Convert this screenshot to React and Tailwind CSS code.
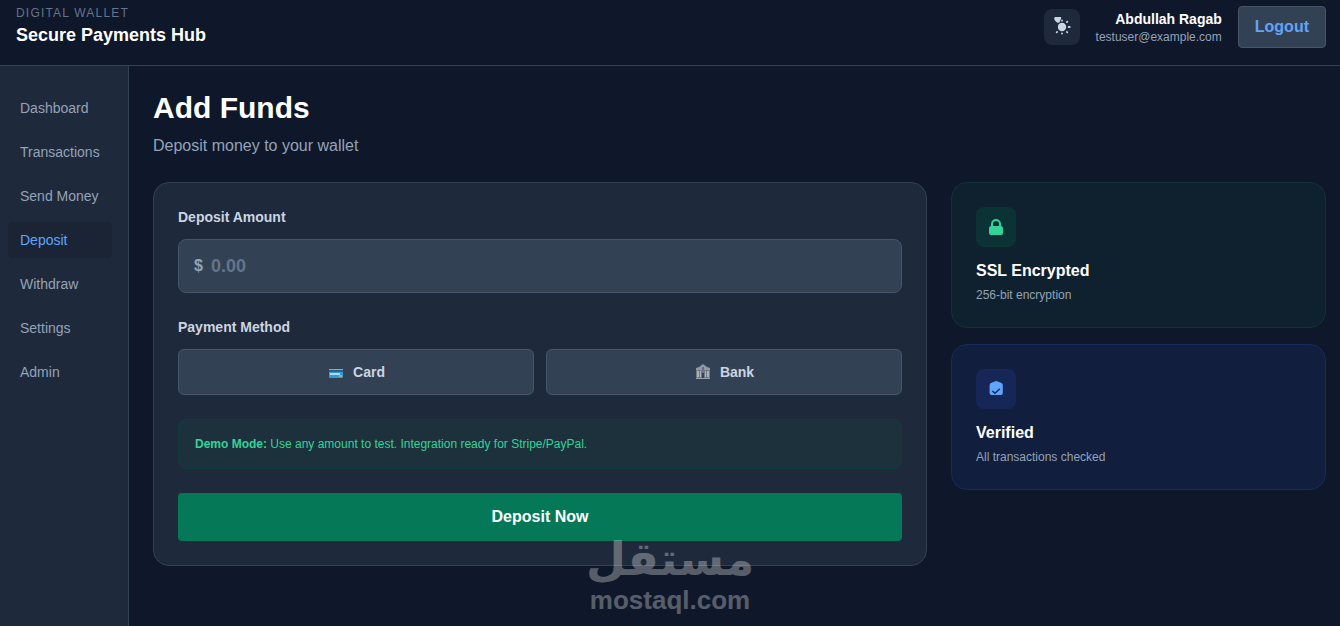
/**
 * Deposit page: header + sidebar + deposit form + trust cards
 */
import { useState } from 'react'

const NAV_ITEMS = ['Dashboard', 'Transactions', 'Send Money', 'Deposit', 'Withdraw', 'Settings', 'Admin']

const ThemeIcon = () => (
  <svg width="20" height="20" viewBox="0 0 20 20" fill="currentColor" aria-hidden="true">
    <circle cx="10" cy="10" r="4.2" />
    <path d="M3 0h5.200a1 1 0 01.9 1.400L7.600 5.200Q5.800 6.400 4 4.800L2.300 2.600Q1.800.6 3 0Z" />
    <path
      d="M10 3.500v.2M10 16.300v.2M16.700 10h1M14.900 5.100l.4-.4M14.900 14.900l.4.4M5.100 14.900l-.4.4"
      fill="none"
      stroke="currentColor"
      strokeWidth="1.800"
      strokeLinecap="round"
    />
  </svg>
)

const LockIcon = () => (
  <svg width="20" height="20" viewBox="0 0 20 20" fill="currentColor" aria-hidden="true">
    <path
      fillRule="evenodd"
      clipRule="evenodd"
      d="M5 9V7a5 5 0 0110 0v2a2 2 0 012 2v5a2 2 0 01-2 2H5a2 2 0 01-2-2v-5a2 2 0 012-2zm8-2v2H7V7a3 3 0 016 0z"
    />
  </svg>
)

const VerifiedIcon = () => (
  <svg width="20" height="20" viewBox="0 0 20 20" aria-hidden="true">
    <path
      d="M8.700 2.400q1.500-.7 3 0l3.800 1.700q1.300.7 1.300 2.200V14a2 2 0 01-2 2H5.600a2 2 0 01-2-2V6.300q0-1.500 1.300-2.200Z"
      fill="currentColor"
    />
    <path d="M6.300 12l2.600 2.300 5-4.600" fill="none" stroke="#162a5c" strokeWidth="1.400" />
  </svg>
)

const CardIcon = () => (
  <svg width="18" height="18" viewBox="0 0 18 18" aria-hidden="true">
    <rect x="2" y="6" width="14" height="9" rx="1" fill="#2a9fe0" />
    <rect x="2" y="6" width="14" height="1" fill="#5bb8ee" />
    <rect x="2" y="7" width="14" height="2" fill="#35607f" />
    <rect x="3" y="10" width="10" height="2" fill="#b9d6ea" />
    <rect x="12" y="12" width="3" height="2" fill="#c9a45c" />
  </svg>
)

const BankIcon = () => (
  <svg width="18" height="18" viewBox="0 0 18 18" aria-hidden="true">
    <path d="M2 7V5l3-1 4-3 4 3 3 1v2Z" fill="#8f98a3" />
    <path d="M2 7h14v9H2Z" fill="#6f7a86" />
    <path d="M3 8h2v6H3zM6 8h1v6H6zM11 8h1v6h-1zM13 8h2v6h-2z" fill="#a9b1ba" />
    <rect x="8" y="10" width="2" height="5" fill="#39414d" />
    <rect x="8" y="4" width="2" height="3" fill="#7d5aa8" />
    <rect x="2" y="15" width="14" height="1" fill="#9aa3ad" />
  </svg>
)

const METHODS = [
  { id: 'card', label: 'Card', Icon: CardIcon },
  { id: 'bank', label: 'Bank', Icon: BankIcon },
]

const Header = () => (
  <header className="flex items-center justify-between pt-[5px] pb-4 pl-4 pr-3.5 border-b border-[#334155]">
    <div>
      <p className="text-xs tracking-widest text-[#64748b]">DIGITAL WALLET</p>
      <p className="text-lg font-bold text-white">Secure Payments Hub</p>
    </div>
    <div className="flex items-center gap-4">
      <button
        className="w-9 h-9 rounded-lg bg-[#1e293b] text-[#cbd5e1] flex items-center justify-center"
        aria-label="Toggle theme"
      >
        <ThemeIcon />
      </button>
      <div className="text-right">
        <p className="text-sm font-bold text-white">Abdullah Ragab</p>
        <p className="text-xs text-[#94a3b8]">testuser@example.com</p>
      </div>
      <button className="px-4 py-2 rounded border border-[#475569] bg-[#334155] font-bold text-[#60a5fa]">
        Logout
      </button>
    </div>
  </header>
)

const Sidebar = ({ active }) => (
  <aside className="w-[129px] shrink-0 bg-[#1e293b] border-r border-[#334155] pt-6 pl-2 pr-4">
    <nav className="flex flex-col gap-2">
      {NAV_ITEMS.map((item) => (
        <a
          key={item}
          href="#"
          className={`px-3 py-2 rounded text-sm whitespace-nowrap ${
            item === active ? 'bg-[#1b2435] text-[#60a5fa]' : 'text-[#94a3b8]'
          }`}
        >
          {item}
        </a>
      ))}
    </nav>
  </aside>
)

const DepositForm = () => {
  const [amount, setAmount] = useState('')
  const [method, setMethod] = useState(null)

  return (
    <form
      onSubmit={(e) => e.preventDefault()}
      className="col-span-2 self-start flex flex-col gap-6 p-6 rounded-2xl border border-[#334155] bg-[#1e293b]"
    >
      <div>
        <label htmlFor="amount" className="block mb-3 text-sm font-bold text-[#cbd5e1]">
          Deposit Amount
        </label>
        <div className="flex items-center gap-2 pl-[15px] pr-4 rounded-lg border border-[#475569] bg-[#334155]">
          <span className="font-bold text-[#94a3b8]">$</span>
          <input
            id="amount"
            value={amount}
            onChange={(e) => setAmount(e.target.value)}
            placeholder="0.00"
            className="flex-1 min-w-0 py-3 bg-transparent text-lg font-bold text-white placeholder:text-[#64748b] outline-none"
          />
        </div>
      </div>

      <div>
        <p className="mb-3 text-sm font-bold text-[#cbd5e1]">Payment Method</p>
        <div className="grid grid-cols-2 gap-3">
          {METHODS.map(({ id, label, Icon }) => (
            <button
              key={id}
              type="button"
              aria-pressed={method === id}
              onClick={() => setMethod(id)}
              className="flex items-center justify-center gap-2 py-3 rounded-md border border-[#475569] bg-[#334155] text-sm font-bold text-[#cbd5e1]"
            >
              <Icon />
              {label}
            </button>
          ))}
        </div>
      </div>

      <p className="p-4 rounded-lg border border-[#0f3d3e] bg-[#1c313b] text-xs text-[#34d399]">
        <strong>Demo Mode:</strong> Use any amount to test. Integration ready for Stripe/PayPal.
      </p>

      <button type="submit" className="py-3 rounded-sm bg-[#047857] font-bold text-white">
        Deposit Now
      </button>
    </form>
  )
}

const InfoCard = ({ title, text, className, iconClassName, children }) => (
  <div className={`p-6 rounded-2xl border ${className}`}>
    <div className={`w-10 h-10 rounded-lg flex items-center justify-center ${iconClassName}`}>{children}</div>
    <h2 className="mt-3 font-bold text-white">{title}</h2>
    <p className="mt-1 text-xs text-[#94a3b8]">{text}</p>
  </div>
)

const Watermark = () => (
  <div className="absolute left-1/2 bottom-3 -translate-x-1/2 flex flex-col items-center text-white opacity-30 pointer-events-none">
    <span
      lang="ar"
      dir="rtl"
      className="font-['DejaVu_Sans',sans-serif] text-[46px] leading-[54px] font-bold"
    >
      مستقل
    </span>
    <span className="text-[26px] leading-7 font-bold">mostaql.com</span>
  </div>
)

const App = () => (
  <div className="relative min-h-screen flex flex-col bg-[#0f172a] font-['Liberation_Sans',Arial,sans-serif]">
    <Header />
    <div className="flex-1 flex">
      <Sidebar active="Deposit" />
      <main className="flex-1 min-w-0 pt-6 pb-6 pl-6 pr-3.5">
        <h1 className="text-3xl font-bold text-white">Add Funds</h1>
        <p className="mt-2 text-[#94a3b8]">Deposit money to your wallet</p>
        <div className="mt-6 grid grid-cols-3 gap-6">
          <DepositForm />
          <div className="flex flex-col gap-4">
            <InfoCard
              title="SSL Encrypted"
              text="256-bit encryption"
              className="border-[#0f3337] bg-[#0f212e]"
              iconClassName="bg-[#0b3336] text-[#34d399]"
            >
              <LockIcon />
            </InfoCard>
            <InfoCard
              title="Verified"
              text="All transactions checked"
              className="border-[#172a5c] bg-[#111e3d]"
              iconClassName="bg-[#162657] text-[#60a5fa]"
            >
              <VerifiedIcon />
            </InfoCard>
          </div>
        </div>
      </main>
    </div>
    <Watermark />
  </div>
)

export default App
